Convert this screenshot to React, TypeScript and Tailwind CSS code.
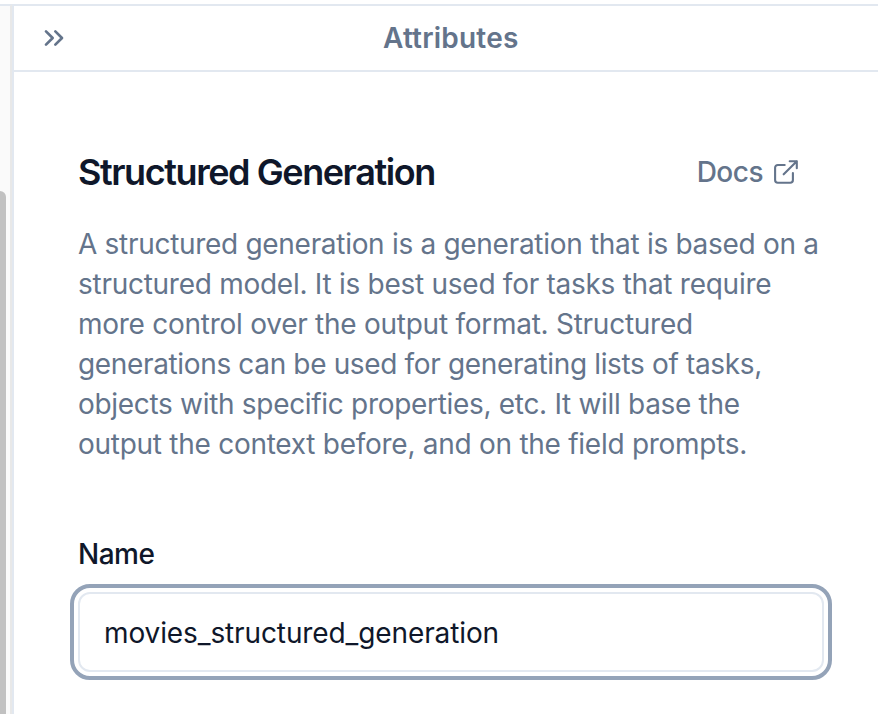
import { ChevronsRight } from "lucide-react";

const lines = [
  { text: "A structured generation is a generation that is based on a", spacing: "tracking-[-0.3px]" },
  { text: "structured model. It is best used for tasks that require", spacing: "tracking-[-0.27px]" },
  { text: "more control over the output format. Structured", spacing: "tracking-[-0.26px]" },
  { text: "generations can be used for generating lists of tasks,", spacing: "tracking-[-0.35px]" },
  { text: "objects with specific properties, etc. It will base the", spacing: "tracking-[-0.31px]" },
  { text: "output the context before, and on the field prompts.", spacing: "tracking-[-0.27px]" },
];

function DocsIcon() {
  return (
    <svg width="24" height="24" viewBox="0 0 24 24" fill="none" stroke="currentColor" strokeWidth="2.1" strokeLinecap="round" strokeLinejoin="round">
      <path d="M10.7 5H3.8a2.7 2.7 0 0 0-2.7 2.7v12.4a2.7 2.7 0 0 0 2.7 2.7h12.4a2.7 2.7 0 0 0 2.7-2.7v-7" />
      <path d="M9.7 14.3 22.8 1.2M15.7 1.2h7.1v7.1" />
    </svg>
  );
}

export default function App() {
  return (
    <div className="flex h-[714px] w-[878px] overflow-hidden bg-white font-['Inter',sans-serif] text-[#64748b]">
      <div className="mt-1 flex w-3 shrink-0 flex-col border-t-2 border-t-[#e2e8f0] border-r-2 border-r-[#e8e8e8] bg-[#fafafa]">
        <div className="mt-[185px] w-1.5 flex-1 rounded-tr-md bg-[#c1c1c1]" />
      </div>
      <aside className="mt-1 flex flex-1 flex-col border-t-2 border-l-2 border-[#e2e8f0]">
        <header className="flex h-[66px] shrink-0 items-center border-b-2 border-[#e2e8f0] pl-6">
          <ChevronsRight size={32} strokeWidth={2} />
          <h2 className="ml-[313px] text-[28px] leading-10 font-semibold tracking-[0.2px] whitespace-nowrap">Attributes</h2>
        </header>
        <main className="flex flex-col pl-16">
          <div className="mt-[80px] flex h-10 w-[720px] items-center justify-between">
            <h1 className="text-[36px] leading-10 font-semibold tracking-[-1.43px] text-[#0f172a]">Structured Generation</h1>
            <a className="flex items-center gap-[11px] text-[28px] font-medium tracking-[-0.5px]">Docs <DocsIcon /></a>
          </div>
          <p className="mt-8 text-[28px] leading-10 whitespace-nowrap">
            {lines.map((l) => <span key={l.text} className={`block ${l.spacing}`}>{l.text}</span>)}
          </p>
          <label className="mt-[76px] text-[28px] leading-7 font-medium tracking-[-0.5px] text-[#0f172a]">Name</label>
          <div className="mt-[16px] -ml-2 h-24 w-[762px] rounded-[20px] border-4 border-[#94a3b8] p-1">
            <input className="h-full w-full rounded-xl border-2 border-[#e2e8f0] px-6 pt-0.5 text-[28px] tracking-[-0.11px] text-[#0f172a] outline-none" defaultValue="movies_structured_generation" />
          </div>
        </main>
      </aside>
    </div>
  );
}
